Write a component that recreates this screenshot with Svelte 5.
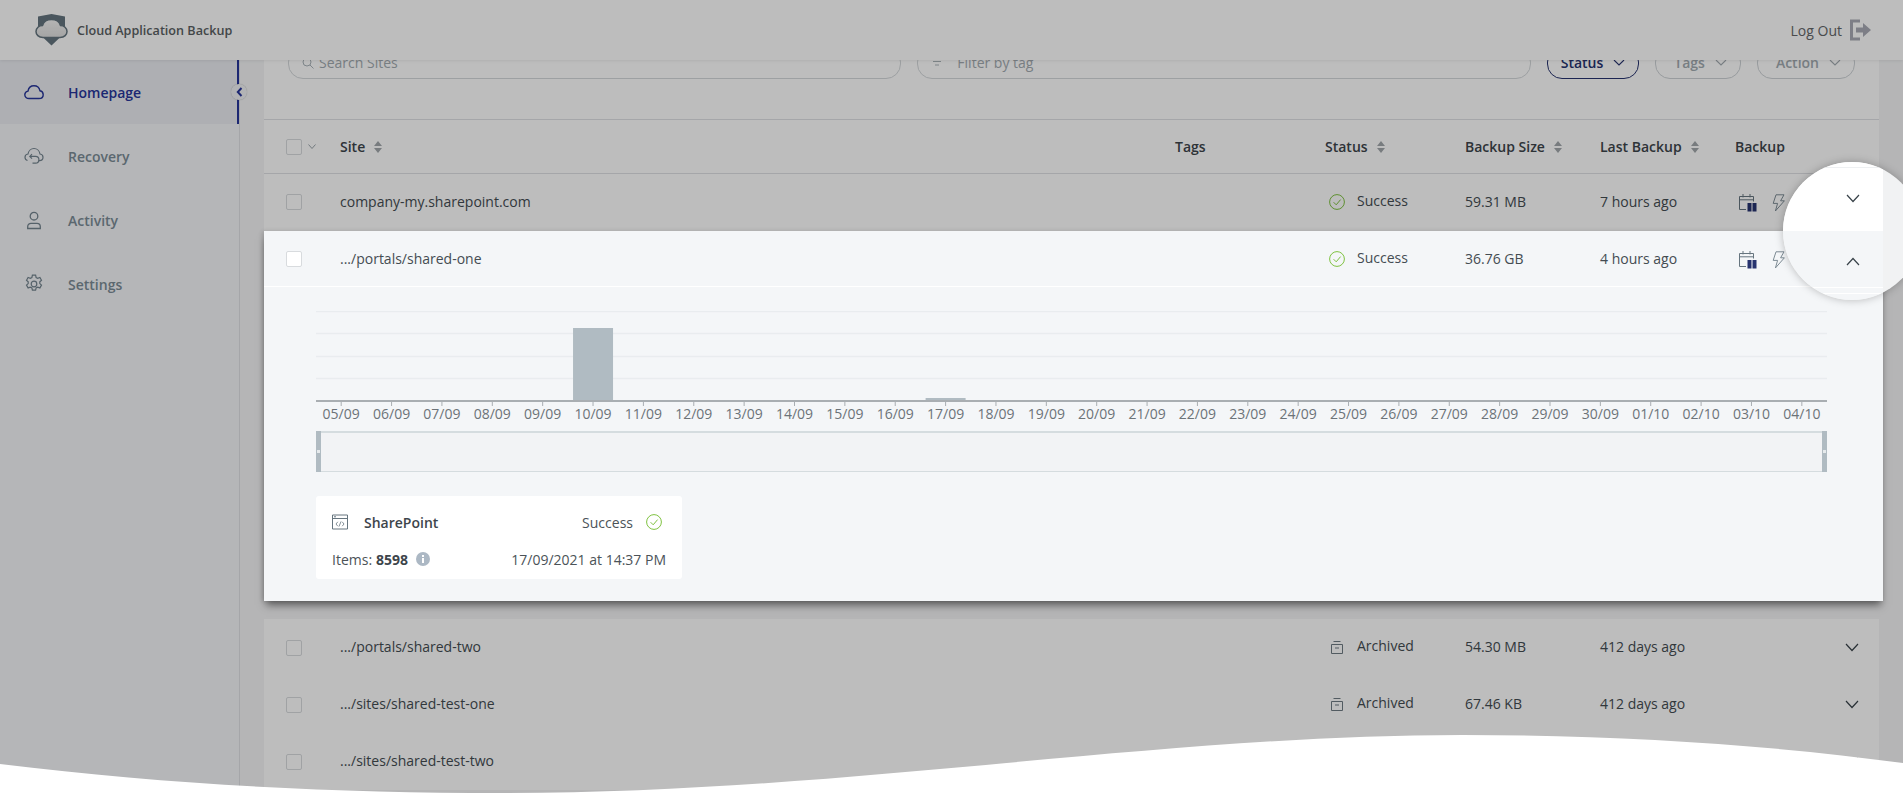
<script lang="ts">
	const days = [
		'05/09', '06/09', '07/09', '08/09', '09/09', '10/09', '11/09', '12/09', '13/09', '14/09',
		'15/09', '16/09', '17/09', '18/09', '19/09', '20/09', '21/09', '22/09', '23/09', '24/09',
		'25/09', '26/09', '27/09', '28/09', '29/09', '30/09', '01/10', '02/10', '03/10', '04/10'
	];
	const values: Record<string, number> = { '10/09': 73, '17/09': 3 };
	const band = 1511 / days.length;

	const lowerRows = [
		{ site: '.../portals/shared-two', size: '54.30 MB', last: '412 days ago' },
		{ site: '.../sites/shared-test-one', size: '67.46 KB', last: '412 days ago' },
		{ site: '.../sites/shared-test-two', size: '61.02 KB', last: '412 days ago' }
	];

	const columns = ['Status', 'Backup Size', 'Last Backup'];
</script>

{#snippet sortIcon()}
	<svg class="sort" width="8" height="12" viewBox="0 0 8 12"><path d="M4 0 8 5H0zM4 12 0 7h8z" /></svg>
{/snippet}

{#snippet okIcon()}
	<svg class="ok" width="16" height="16" viewBox="0 0 16 16" fill="none" stroke="#7fc241" stroke-width="1">
		<circle cx="8" cy="8" r="7.4" />
		<path d="M4.600 8.200 7.200 10.800 11.600 5.600" />
	</svg>
{/snippet}

{#snippet archiveIcon()}
	<svg class="archive" width="12" height="13" viewBox="0 0 12 13" fill="none" stroke="#6f7b83" stroke-width="1">
		<path d="M2.500.5h7M.5 3.500h11v9h-11zM4 7h4" />
	</svg>
{/snippet}

{#snippet backupIcons()}
	<div class="backupIcons">
		<svg width="20" height="20" viewBox="0 0 20 20" fill="none">
			<path d="M8 16.500H1.500V3.500h14V8.500M1.500 6.800h14M5 1v3.400M12 1v3.400" stroke="#66757f" stroke-width="1" />
			<path d="M9.500 10h4v8.500h-4zM14.500 10h4v8.500h-4z" fill="#27336f" />
		</svg>
		<svg width="13" height="18" viewBox="0 0 13 18" fill="none" stroke="#7d8b94" stroke-width="1">
			<path d="M4 .8h8L8.600 6.800h3.800L3.400 17 5.600 9.400H1.200z" />
		</svg>
	</div>
{/snippet}

{#snippet chevron(up = false)}
	<svg class="chevron" width="14" height="9" viewBox="0 0 14 9" fill="none" stroke="#39434a" stroke-width="1.200">
		<path d={up ? 'M1 8 7 1.500 13 8' : 'M1 1 7 7.500 13 1'} />
	</svg>
{/snippet}

{#snippet caret()}
	<svg width="12" height="7" viewBox="0 0 12 7" fill="none" stroke="currentColor" stroke-width="1.100"><path d="M1 1l5 5 5-5" /></svg>
{/snippet}

<div class="page">
	<header class="topBar">
		<div class="brand">
			<svg width="33" height="32" viewBox="0 0 33 32">
				<defs>
					<linearGradient id="cloudFill" x1="0" y1="0" x2="0" y2="1">
						<stop offset="0" stop-color="#f4f4f4" />
						<stop offset="1" stop-color="#dedede" />
					</linearGradient>
				</defs>
				<path d="M3 2.500 16.500 0 30 2.500V14H3zM6.500 22h20l-10 9.500z" fill="#64757f" />
				<path
					d="M8 23.500C3.500 23.500 1 20.500 1 17.500 1 14 4 11.500 7.500 11.500 8.500 8 12 5.500 16.500 5.500S24.500 8 25.500 11.500C29 11.500 32 14 32 17.500 32 20.500 29.500 23.500 25 23.500z"
					fill="url(#cloudFill)"
					stroke="#64757f"
					stroke-width="1.500"
				/>
			</svg>
			<span>Cloud Application Backup</span>
		</div>
		<div class="logout">
			<span>Log Out</span>
			<svg width="22" height="22" viewBox="0 0 22 22" fill="none">
				<path d="M11 2H2.500v18H11" stroke="#a9abb5" stroke-width="3" />
				<path d="M7 8.500h7V4l8 7-8 7v-4.500H7z" fill="#a9abb5" />
			</svg>
		</div>
	</header>

	<div class="body">
		<nav class="sideBar">
			<div class="navItem active">
				<svg width="20" height="20" viewBox="0 0 20 20" fill="none" stroke="#27359a" stroke-width="1.400">
					<path d="M5 16.500C2.600 16.500.8 14.900.8 12.800.8 10.900 2.200 9.400 4 9.100 4.500 6 7 3.800 10 3.800c3 0 5.400 2.100 6 5 1.900.4 3.200 2 3.200 3.900 0 2.200-1.800 3.800-4.200 3.800z" />
				</svg>
				<span>Homepage</span>
				<div class="collapse">
					<svg width="7" height="10" viewBox="0 0 7 10" fill="none" stroke="#27359a" stroke-width="2"><path d="M5.500 1 1.800 5l3.700 4" /></svg>
				</div>
			</div>
			<div class="navItem">
				<svg width="20" height="20" viewBox="0 0 20 20" fill="none" stroke="#74858f" stroke-width="1.200">
					<path d="M14.500 14.600h1c2 0 3.500-1.500 3.500-3.300 0-1.700-1.300-3.100-3-3.300C15.500 4.900 13 2.500 10 2.500S4.500 4.900 4 8c-1.700.2-3 1.600-3 3.300 0 1.500 1 2.800 2.500 3.200" />
					<path d="M8 8.200 5.800 10.400 8 12.600M6 10.400h5.500a3.400 3.400 0 0 1 0 6.800H8.500" />
				</svg>
				<span>Recovery</span>
			</div>
			<div class="navItem">
				<svg width="20" height="20" viewBox="0 0 20 20" fill="none" stroke="#74858f" stroke-width="1.300">
					<circle cx="10" cy="6.200" r="3.800" />
					<path d="M3.700 18.500v-1.800c0-2 1.500-3.300 3.300-3.300h6c1.800 0 3.300 1.300 3.300 3.300v1.800z" />
				</svg>
				<span>Activity</span>
			</div>
			<div class="navItem">
				<svg width="20" height="20" viewBox="0 0 20 20" fill="none" stroke="#74858f" stroke-width="1.200">
					<circle cx="10" cy="10" r="2.800" />
					<path d="M8.400 1.200h3.200l.5 2.300 1.600.8 2.200-.8 1.600 2.800-1.700 1.500v1.800l1.700 1.500-1.600 2.800-2.200-.8-1.600.8-.5 2.300H8.400l-.5-2.300-1.600-.8-2.200.8-1.600-2.800 1.700-1.500V7.800L2.500 6.300l1.600-2.800 2.200.8 1.600-.8z" />
				</svg>
				<span>Settings</span>
			</div>
		</nav>

		<main class="main">
			<section class="sheet">
				<div class="filters">
					<label class="field">
						<svg width="12" height="12" viewBox="0 0 12 12" fill="none" stroke="#aab3b9" stroke-width="1"><circle cx="5" cy="5" r="4" /><path d="M8 8l3.500 3.500" /></svg>
						<input class="search" placeholder="Search Sites" />
					</label>
					<label class="field">
						<svg width="12" height="9" viewBox="0 0 12 9" fill="none" stroke="#aab3b9" stroke-width="1"><path d="M0 1h12M2 4.500h8M4 8h4" /></svg>
						<input class="tagInput" placeholder="Filter by tag" />
					</label>
					<button class="filterBtn primary">Status {@render caret()}</button>
					<button class="filterBtn">Tags {@render caret()}</button>
					<button class="filterBtn">Action {@render caret()}</button>
				</div>

				<div class="row head">
					<div class="checkCell">
						<span class="check"></span>
						<svg width="8" height="5" viewBox="0 0 8 5" fill="none" stroke="#9aa4ab"><path d="M.5.5 4 4.500 7.500.5" /></svg>
					</div>
					<div class="th">Site {@render sortIcon()}</div>
					<div class="th">Tags</div>
					{#each columns as col}
						<div class="th">{col} {@render sortIcon()}</div>
					{/each}
					<div class="th">Backup</div>
				</div>

				<div class="row first">
					<div class="checkCell"><span class="check"></span></div>
					<div class="cell">company-my.sharepoint.com</div>
					<div></div>
					<div class="status">{@render okIcon()}<span>Success</span></div>
					<div class="cell">59.31 MB</div>
					<div class="cell">7 hours ago</div>
					{@render backupIcons()}
				</div>
			</section>

			<section class="expanded">
				<div class="row open">
					<div class="checkCell"><span class="check"></span></div>
					<div class="cell">.../portals/shared-one</div>
					<div></div>
					<div class="status">{@render okIcon()}<span>Success</span></div>
					<div class="cell">36.76 GB</div>
					<div class="cell">4 hours ago</div>
					{@render backupIcons()}
				</div>

				<div class="details">
					<svg class="chart" width="1511" height="120" viewBox="0 0 1511 120">
						{#each [0, 22, 45, 67] as y}
							<line x1="0" x2="1511" y1={y + 0.5} y2={y + 0.5} stroke="#e9ecef" stroke-width="1.300" />
						{/each}
						{#each days as day, i}
							{#if values[day]}
								<rect x={i * band + 5.2} y={90 - values[day]} width="40" height={values[day]} fill="#b0bbc2" />
							{/if}
							<line x1={i * band + 25.2} x2={i * band + 25.2} y1="90" y2="95" stroke="#a9aeb2" />
							<text x={i * band + 25.2} y="108" text-anchor="middle">{day}</text>
						{/each}
						<line x1="0" x2="1511" y1="90" y2="90" stroke="#a9aeb2" stroke-width="2" />
					</svg>

					<div class="slider">
						<span class="handle"></span>
						<span class="handle"></span>
					</div>

					<div class="card">
						<div class="cardLine">
							<div class="cardName">
								<svg width="16" height="16" viewBox="0 0 16 16" fill="none" stroke="#66757f">
									<path d="M.5 1h15v14H.5zM.5 4.500h15M2 2.800h2" />
									<path d="M5.800 7.800 4 10l1.800 2.200M10.200 7.800 12 10l-1.800 2.200M9 7.500l-2 5" stroke-width=".8" />
								</svg>
								<strong>SharePoint</strong>
							</div>
							<div class="cardStatus"><span>Success</span>{@render okIcon()}</div>
						</div>
						<div class="cardLine">
							<div class="items">
								Items: <b>8598</b>
								<svg width="14" height="14" viewBox="0 0 14 14"><circle cx="7" cy="7" r="7" fill="#acb8c4" /><rect x="6" y="6" width="2" height="5" fill="#fff" /><rect x="6" y="3" width="2" height="2" fill="#fff" /></svg>
							</div>
							<div>17/09/2021 at 14:37 PM</div>
						</div>
					</div>
				</div>
			</section>

			<section class="sheet lower">
				{#each lowerRows as r}
					<div class="row">
						<div class="checkCell"><span class="check"></span></div>
						<div class="cell">{r.site}</div>
						<div></div>
						<div class="status">{@render archiveIcon()}<span>Archived</span></div>
						<div class="cell">{r.size}</div>
						<div class="cell">{r.last}</div>
						<div class="chevronCell">{@render chevron()}</div>
					</div>
				{/each}
			</section>
		</main>
	</div>

	<div class="dim"></div>

	<div class="spotlight">
		<div class="spotRow">{@render chevron()}</div>
		<div class="spotRow openSpot">{@render chevron(true)}</div>
	</div>

	<svg class="wave" width="1903" height="793" viewBox="0 0 1903 793">
		<path d="M0 764C170 785 340 793 500 793 850 793 1150 735 1462 735 1620 735 1770 745 1903 763V793H0z" fill="#fff" />
	</svg>
</div>

<style>
	:global(body) {
		margin: 0;
		background: #f4f5f6;
	}

	.page {
		position: relative;
		width: 1903px;
		height: 793px;
		overflow: hidden;
		font-family: 'Open Sans', 'Liberation Sans', sans-serif;
		font-size: 14px;
		color: #444c52;
	}

	.topBar {
		position: relative;
		z-index: 5;
		height: 60px;
		display: flex;
		align-items: center;
		justify-content: space-between;
		padding: 0 32px 0 35px;
		background: #fff;
		box-shadow: 0 1px 3px rgba(0, 0, 0, 0.08);
	}

	.brand {
		display: flex;
		align-items: center;
		gap: 9px;
		font-size: 12.6px;
		font-weight: 600;
		color: #5a5f63;
	}

	.logout {
		display: flex;
		align-items: center;
		gap: 7px;
		color: #636669;
	}

	.body {
		display: flex;
		height: 733px;
	}

	.sideBar {
		position: relative;
		z-index: 4;
		flex: 0 0 240px;
		box-sizing: border-box;
		background: #f5f6f9;
		border-right: 1px solid #dfe1e4;
	}

	.navItem {
		position: relative;
		height: 64px;
		display: flex;
		align-items: center;
		gap: 24px;
		padding-left: 24px;
		font-size: 14px;
		font-weight: 600;
		color: #7b8c96;
	}

	.navItem.active {
		background: #ebedf2;
		color: #27359a;
		box-shadow: inset -2px 0 0 #27359a;
	}

	.collapse {
		position: absolute;
		right: -8px;
		top: 24px;
		width: 16px;
		height: 16px;
		border-radius: 50%;
		background: #f1f2f4;
		display: flex;
		align-items: center;
		justify-content: center;
		box-shadow: 0 0 1px rgba(0, 0, 0, 0.3);
	}

	.main {
		flex: 1;
		padding: 0 24px;
		min-width: 0;
	}

	.sheet {
		background: #fff;
	}

	.filters {
		box-sizing: border-box;
		height: 60px;
		display: flex;
		align-items: flex-end;
		gap: 16px;
		padding: 0 24px 40px;
		overflow: hidden;
		border-bottom: 1px solid #dfe1e4;
	}

	.field {
		position: relative;
		flex: 1;
		height: 32px;
	}

	.field svg {
		position: absolute;
		left: 14px;
		top: 10px;
	}

	.field input {
		box-sizing: border-box;
		width: 100%;
		height: 32px;
		padding-bottom: 2px;
		border: 1.5px solid #d4d8db;
		border-radius: 15px;
		background: #fff;
		font: inherit;
		color: inherit;
		outline: none;
	}

	.field input::placeholder {
		color: #a3abb1;
	}

	.search {
		padding-left: 30px;
	}

	.tagInput {
		padding-left: 39px;
	}

	.filterBtn {
		height: 32px;
		flex-shrink: 0;
		box-sizing: border-box;
		display: flex;
		align-items: center;
		gap: 10px;
		padding: 0 13px 2px 18px;
		border: 1.5px solid #cdd2d6;
		border-radius: 15px;
		background: #fff;
		font: inherit;
		font-weight: 600;
		color: #a3abb1;
	}

	.filterBtn.primary {
		padding: 0 13px 2px;
		border-color: #27336f;
		color: #27336f;
	}

	.row {
		box-sizing: border-box;
		display: grid;
		grid-template-columns: 76px 835px 150px 140px 135px 135px 1fr;
		align-items: center;
		height: 57px;
	}

	.row.head {
		height: 54px;
		border-bottom: 1px solid #dfe1e4;
	}

	.row.first {
		padding-bottom: 1px;
	}

	.row.open {
		height: 56px;
		padding-top: 1px;
		border-bottom: 1px solid #fff;
	}

	.cell {
		padding-bottom: 2px;
	}

	.th {
		display: flex;
		align-items: center;
		gap: 7px;
		font-weight: 600;
		color: #3d454b;
	}

	.sort {
		fill: #a3a8ac;
		margin-left: 2px;
	}

	.checkCell {
		display: flex;
		align-items: center;
		gap: 6px;
		padding-left: 22px;
	}

	.check {
		box-sizing: border-box;
		width: 16px;
		height: 16px;
		background: #fff;
		border: 1px solid #d8dbde;
		border-radius: 2px;
	}

	.status {
		display: flex;
		align-items: center;
		gap: 12px;
	}

	.status span {
		margin-top: -4px;
	}

	.ok {
		margin-left: 4px;
		flex-shrink: 0;
	}

	.archive {
		margin-left: 6px;
		margin-right: 2px;
		flex-shrink: 0;
	}

	.backupIcons {
		display: flex;
		align-items: center;
		gap: 14px;
		padding-left: 3px;
		padding-top: 1px;
	}

	.chevronCell {
		display: flex;
		justify-content: flex-end;
		padding-right: 20px;
	}

	.chevron {
		display: block;
	}

	.expanded {
		position: relative;
		z-index: 11;
		margin-right: -4px;
		height: 370px;
		background: #f4f6f8;
		box-shadow: 0 6px 8px -2px rgba(0, 0, 0, 0.5), -2px 0 4px rgba(0, 0, 0, 0.12);
	}

	.details {
		padding: 24px 52px 0;
	}

	.chart {
		display: block;
	}

	.chart text {
		font-size: 14px;
		fill: #6c7378;
	}

	.slider {
		box-sizing: border-box;
		width: 1511px;
		height: 41px;
		display: flex;
		justify-content: space-between;
		background: #f2f3f5;
		border-top: 2px solid #d5dcdf;
		border-bottom: 1px solid #d5dcdf;
	}

	.handle {
		width: 5px;
		margin: -2px 0 -1px;
		background: #b0bbc2;
		position: relative;
	}

	.handle::after {
		content: '';
		position: absolute;
		left: 1px;
		top: 19px;
		width: 3px;
		height: 3px;
		background: #e6eaec;
	}

	.card {
		box-sizing: border-box;
		width: 366px;
		height: 83px;
		margin-top: 24px;
		padding: 10px 16px 0;
		background: #fff;
		border-radius: 3px;
		color: #4b5358;
	}

	.cardLine {
		display: flex;
		align-items: center;
		justify-content: space-between;
		height: 32px;
	}

	.cardLine + .cardLine {
		margin-top: 5px;
	}

	.cardName {
		display: flex;
		align-items: center;
		gap: 16px;
	}

	.cardName strong {
		font-weight: 600;
		color: #3d454b;
	}

	.cardStatus {
		display: flex;
		align-items: center;
		gap: 13px;
		padding-right: 4px;
	}

	.cardStatus .ok {
		margin: 0;
	}

	.items {
		display: flex;
		align-items: center;
		gap: 4px;
	}

	.items b {
		font-weight: 700;
		color: #3d454b;
	}

	.items svg {
		margin-left: 4px;
	}

	.lower {
		margin-top: 18px;
	}

	.dim {
		position: absolute;
		inset: 0;
		z-index: 10;
		background: rgba(0, 0, 0, 0.26);
	}

	.spotlight {
		position: absolute;
		z-index: 12;
		left: 1783px;
		top: 162px;
		width: 138px;
		height: 138px;
		border-radius: 50%;
		overflow: hidden;
		background: #f1f2f3;
		box-shadow: 0 0 8px rgba(0, 0, 0, 0.25);
	}

	.spotRow {
		box-sizing: border-box;
		width: 100px;
		height: 69px;
		background: linear-gradient(#fff 5px, #eef0f2 5px, #eef0f2 6px, #fff 6px);
		display: flex;
		justify-content: flex-end;
		padding: 32px 23px 0 0;
	}

	.openSpot {
		padding-top: 26px;
		background: linear-gradient(#f4f6f8 56px, #fff 56px, #fff 57px, #f4f6f8 57px, #f4f6f8 62px, #fff 62px, #fff 63px, #f4f6f8 63px);
	}

	.wave {
		position: absolute;
		left: 0;
		top: 0;
		z-index: 13;
		pointer-events: none;
	}
</style>
